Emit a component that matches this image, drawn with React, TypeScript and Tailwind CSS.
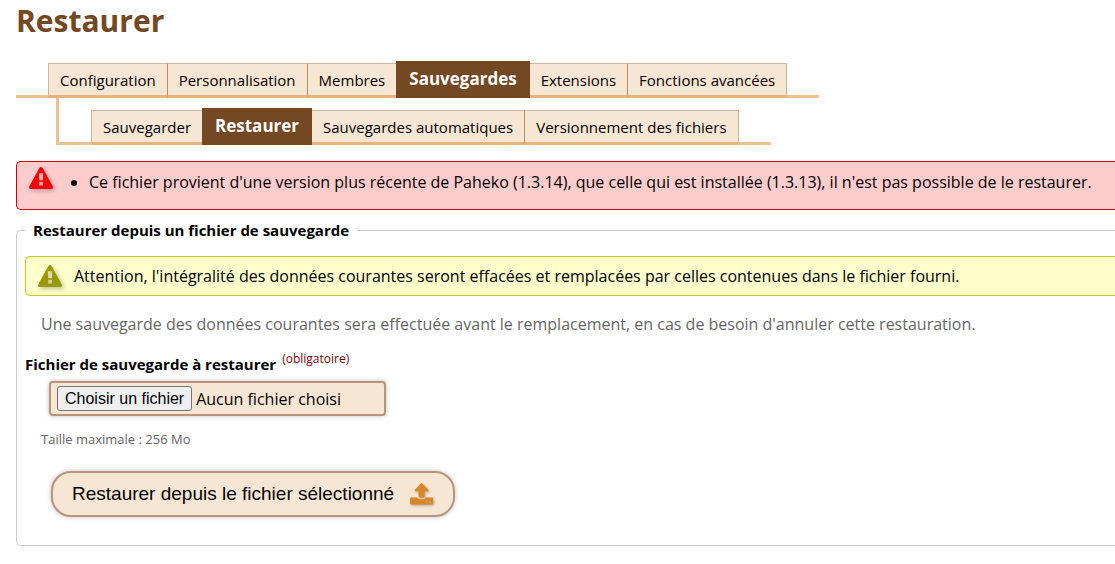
import React, { useRef, useState } from 'react';
import clsx from 'clsx';

interface Tab {
  label: string;
  href: string;
  current?: boolean;
}

const MAIN_TABS: Tab[] = [
  { label: 'Configuration', href: '#configuration' },
  { label: 'Personnalisation', href: '#personnalisation' },
  { label: 'Membres', href: '#membres' },
  { label: 'Sauvegardes', href: '#sauvegardes', current: true },
  { label: 'Extensions', href: '#extensions' },
  { label: 'Fonctions avancées', href: '#avance' }
];

const SUB_TABS: Tab[] = [
  { label: 'Sauvegarder', href: '#sauvegarder' },
  { label: 'Restaurer', href: '#restaurer', current: true },
  { label: 'Sauvegardes automatiques', href: '#auto' },
  { label: 'Versionnement des fichiers', href: '#versions' }
];

function TabList({ tabs, className }: { tabs: Tab[]; className?: string }) {
  return (
    <ul className={clsx('flex w-fit items-end border-b-3 border-[#ecc294] px-8', className)}>
      {tabs.map((tab, i) => (
        <li key={tab.href} className="-mb-[3px]">
          <a
            href={tab.href}
            aria-current={tab.current ? 'page' : undefined}
            className={clsx(
              'block whitespace-nowrap',
              tab.current
                ? 'bg-[#734822] px-[13px] pt-1.5 pb-[7px] text-[17px] leading-6 font-bold text-white'
                : 'border-t border-b-3 border-t-[#d0b49c] border-b-[#e9b27c] bg-[#f8e6d4] px-[11px] pt-1 pb-[3px] text-[15px] leading-6',
              !tab.current && i === 0 && 'border-l border-l-[#d0b49c]',
              !tab.current && i < tabs.length - 1 && !tabs[i + 1].current && 'border-r border-r-[#bc8f69]',
              i === tabs.length - 1 && 'border-r border-r-[#d0b49c]'
            )}
          >
            {tab.label}
          </a>
        </li>
      ))}
    </ul>
  );
}

function WarningIcon({ className }: { className?: string }) {
  return (
    <svg
      viewBox="0 0 24 22"
      className={clsx('h-[22px] w-6 shrink-0 drop-shadow-[2px_2px_2px_rgba(0,0,0,0.25)]', className)}
      fill="currentColor"
      fillRule="evenodd"
      aria-hidden="true"
    >
      <path d="M10.3 1Q12-.9 13.7 1L23.8 19.4Q24.5 21.6 22.4 22H1.6Q-.5 21.6.2 19.4ZM9.8 6.2L10.1 13.2H13.9L14.2 6.2ZM10.1 14.8V18.4H13.9V14.8Z" />
    </svg>
  );
}

function UploadIcon() {
  return (
    <svg
      viewBox="0 0 24 22"
      className="h-[22px] w-6 shrink-0 text-[#d98628] drop-shadow-[1px_1px_1px_rgba(0,0,0,0.3)]"
      fill="currentColor"
      fillRule="evenodd"
      aria-hidden="true"
    >
      <path d="M11 .3Q11.5-.1 12 .3L18 6.6Q19 8 17.6 8.3H14.4V13.6Q14.3 14.4 13.5 14.5H9.5Q8.7 14.4 8.6 13.6V8.3H5.4Q4 8 5 6.6Z" />
      <path d="M1.2 14.5H7.2Q7.8 16.3 9.6 16.3H13.4Q15.2 16.3 15.8 14.5H21.8Q23 14.6 23.1 15.8V20.3Q23 21.4 21.8 21.5H1.2Q.1 21.4 0 20.3V15.8Q.1 14.6 1.2 14.5ZM15.8 18V19.6H17.4V18ZM19.2 18V19.6H20.8V18Z" />
    </svg>
  );
}

function App() {
  const fileInput = useRef<HTMLInputElement>(null);
  const [fileName, setFileName] = useState<string | null>(null);

  return (
    <main className="bg-white pb-4 pl-4 font-['Trebuchet_MS','Open_Sans',sans-serif] text-base text-black">
      <h1 className="text-[30px] leading-[41px] font-bold text-[#734822]">Restaurer</h1>

      <nav className="mt-5" aria-label="Configuration">
        <TabList tabs={MAIN_TABS} />
        <TabList tabs={SUB_TABS} className="ml-10 border-l-3 pt-[10px]" />
      </nav>

      <div
        role="alert"
        className="mt-4 flex items-start rounded-l-[5px] border border-r-0 border-[#cc0000] bg-[#ffcccc] pt-[5px] pb-[15px] pl-3"
      >
        <WarningIcon className="text-[#ff0000]" />
        <ul className="ml-9 list-disc pt-[3px]">
          <li className="leading-6">
            Ce fichier provient d'une version plus récente de Paheko (1.3.14), que celle qui est installée (1.3.13), il
            n'est pas possible de le restaurer.
          </li>
        </ul>
      </div>

      <form onSubmit={(e) => e.preventDefault()}>
        <fieldset className="mt-2 rounded-l-[5px] border border-r-0 border-[#cccccc] pb-7 pl-2">
          <legend className="px-2 text-[15px] leading-6 font-bold">Restaurer depuis un fichier de sauvegarde</legend>

          <div className="mt-3.5 flex items-center rounded-l-[5px] border border-r-0 border-[#cccc00] bg-[#ffffcc] py-[7px] pl-3">
            <WarningIcon className="text-[#999900]" />
            <p className="ml-3">
              Attention, l'intégralité des données courantes seront effacées et remplacées par celles contenues dans le
              fichier fourni.
            </p>
          </div>

          <p className="mt-4 ml-4 text-[#666666]">
            Une sauvegarde des données courantes sera effectuée avant le remplacement, en cas de besoin d'annuler cette
            restauration.
          </p>

          <div className="mt-4 flex items-start gap-1.5">
            <label htmlFor="backup-file" className="text-[15px] leading-6 font-bold">
              Fichier de sauvegarde à restaurer
            </label>
            <span className="text-xs leading-[14px] text-[#880000]">(obligatoire)</span>
          </div>

          <div className="mt-[5px] ml-6 flex w-[337px] items-center gap-1 rounded border-2 border-[#b8957a] bg-[#f8e6d4] px-1.5 py-[3px] shadow-[0_0_5px_rgba(0,0,0,0.25)]">
            <input
              ref={fileInput}
              id="backup-file"
              type="file"
              required
              className="hidden"
              onChange={(e) => setFileName(e.target.files?.[0]?.name ?? null)}
            />
            <button
              type="button"
              onClick={() => fileInput.current?.click()}
              className="rounded-[3px] border border-[#767676] bg-[#efefef] px-[7px] font-['Liberation_Sans',Arial,sans-serif] leading-[23px]"
            >
              Choisir un fichier
            </button>
            <span>{fileName ?? 'Aucun fichier choisi'}</span>
          </div>

          <p className="mt-3.5 ml-4 text-[13px] leading-[18px] text-[#666666]">Taille maximale : 256 Mo</p>

          <button
            type="submit"
            className="mt-[23px] ml-[26px] flex items-center gap-4 rounded-[20px] border-2 border-[#b8957a] bg-[#f8e6d4] px-[19px] py-[7px] font-['Liberation_Sans',Arial,sans-serif] text-[19px] leading-7 shadow-[0_0_5px_rgba(0,0,0,0.25)]"
          >
            Restaurer depuis le fichier sélectionné
            <UploadIcon />
          </button>
        </fieldset>
      </form>
    </main>
  );
}

export default App;
